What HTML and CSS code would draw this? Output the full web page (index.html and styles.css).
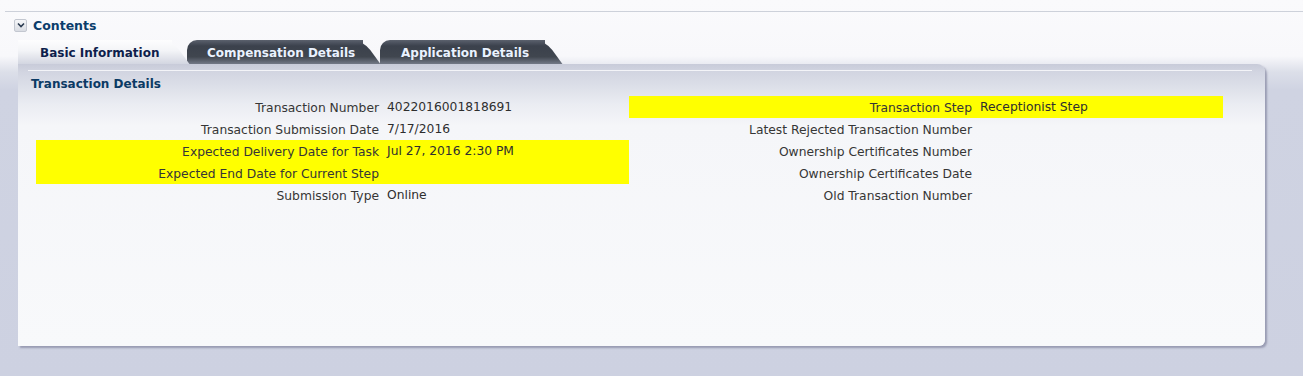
FILE: index.html
```html
<!DOCTYPE html>
<html lang="en">
<head>
    <meta charset="UTF-8">
    <title>Transaction Details</title>
    <link rel="stylesheet" href="styles.css">
</head>
<body>
    <div class="contents-box">
        <div class="contents-head">
            <span class="disclose">
                <svg width="10" height="10" viewBox="0 0 10 10"><path d="M2 3.5 L5 6.5 L8 3.5" fill="none" stroke="#2a3a50" stroke-width="1.6"/></svg>
            </span>
            <span class="contents-title">Contents</span>
        </div>

        <div class="tabs">
            <div class="tab tab-active">Basic Information</div>
            <div class="tab tab-comp">Compensation Details</div>
            <div class="tab tab-app">Application Details</div>
        </div>

        <div class="panel">
            <div class="panel-head">Transaction Details</div>
            <div class="form">
                <div class="col">
                    <div class="row"><span class="label">Transaction Number</span><span class="value">4022016001818691</span></div>
                    <div class="row"><span class="label">Transaction Submission Date</span><span class="value">7/17/2016</span></div>
                    <div class="row hl"><span class="label">Expected Delivery Date for Task</span><span class="value">Jul 27, 2016 2:30 PM</span></div>
                    <div class="row hl"><span class="label">Expected End Date for Current Step</span><span class="value"></span></div>
                    <div class="row"><span class="label">Submission Type</span><span class="value">Online</span></div>
                </div>
                <div class="col">
                    <div class="row hl"><span class="label">Transaction Step</span><span class="value">Receptionist Step</span></div>
                    <div class="row"><span class="label">Latest Rejected Transaction Number</span><span class="value"></span></div>
                    <div class="row"><span class="label">Ownership Certificates Number</span><span class="value"></span></div>
                    <div class="row"><span class="label">Ownership Certificates Date</span><span class="value"></span></div>
                    <div class="row"><span class="label">Old Transaction Number</span><span class="value"></span></div>
                </div>
            </div>
        </div>
    </div>
</body>
</html>
```

FILE: styles.css
```css
body {
    margin: 0;
    padding-top: 11px;
    height: 365px;
    background: linear-gradient(to bottom, #fafafc 0, #f8f8fb 56px, #dcdfe9 72px, #cfd3e2 90px, #cdd1e1 100%);
    font-family: "DejaVu Sans", Verdana, sans-serif;
    font-size: 12px;
    color: #333;
}

.contents-box {
    margin-left: 5px;
    border-top: 1px solid #cdd1da;
}

.contents-head {
    display: flex;
    align-items: center;
    height: 24px;
    padding-top: 1px;
    padding-left: 9px;
    margin-bottom: 3px;
}

.disclose {
    width: 11px;
    height: 11px;
    border: 1px solid #c3c7d0;
    border-radius: 2px;
    background: linear-gradient(#f6f7f9, #d9dce3);
    display: flex;
    align-items: center;
    justify-content: center;
    margin-right: 6px;
}

.contents-title {
    font-weight: bold;
    font-size: 12.5px;
    color: #0b3d6b;
}

.tabs {
    display: flex;
    height: 24px;
    padding-left: 13px;
}

.tab {
    position: relative;
    height: 24px;
    display: flex;
    align-items: center;
    font-weight: bold;
    box-sizing: border-box;
    padding-top: 1px;
}

.tab::after {
    content: "";
    position: absolute;
    top: 0;
    right: 0;
    width: 24px;
    height: 24px;
    background: inherit;
    transform-origin: top left;
    transform: skewX(36deg);
    border-top-right-radius: 10px;
    z-index: -1;
}

.tab-active {
    width: 154px;
    padding-left: 22px;
    color: #0e1e4c;
    background: linear-gradient(to bottom, #fdfdfe 0, #f3f4f7 45%, #d3d6e1 100%);
    z-index: 3;
    margin-right: 15px;
}

.tab-comp,
.tab-app {
    color: #eaf2ff;
    border-top-left-radius: 10px;
    background: linear-gradient(to bottom, #5b616d 0, #3b414c 25%, #40464f 70%, #737987 100%);
}

.tab-comp {
    width: 176px;
    padding-left: 20px;
    margin-right: 17px;
    z-index: 1;
}

.tab-app {
    width: 165px;
    padding-left: 21px;
    z-index: 2;
}

.panel {
    position: relative;
    margin: 0 38px 0 13px;
    padding-top: 6px;
    height: 276px;
    border-radius: 0 8px 6px 0;
    background: linear-gradient(to bottom, #c8cbd9 0, #d2d5e1 8px, #dcdfe8 22px, #eaecf2 40px, #f5f6f9 62px, #f8f9fb 100%);
    box-shadow: 2px 2px 2px rgba(110, 112, 140, 0.55);
}

.panel-head {
    margin: 0 13px 0 10px;
    padding: 1px 0 0 3px;
    height: 23px;
    line-height: 24px;
    border-top: 1px solid #f3f4f8;
    font-weight: bold;
    color: #0b3a64;
}

.form {
    display: flex;
    padding: 1px 0 0 18px;
    font-size: 12.3px;
}

.col {
    width: 593px;
}

.col + .col {
    width: 594px;
}

.row {
    display: flex;
    height: 22px;
    box-sizing: border-box;
    padding-top: 3px;
    line-height: 19px;
}

.row.hl {
    background-color: #ffff00;
}

.label {
    width: 343px;
    text-align: right;
    color: #363636;
}

.value {
    margin-left: 8px;
    line-height: 17px;
    color: #2e2e2e;
}
```
